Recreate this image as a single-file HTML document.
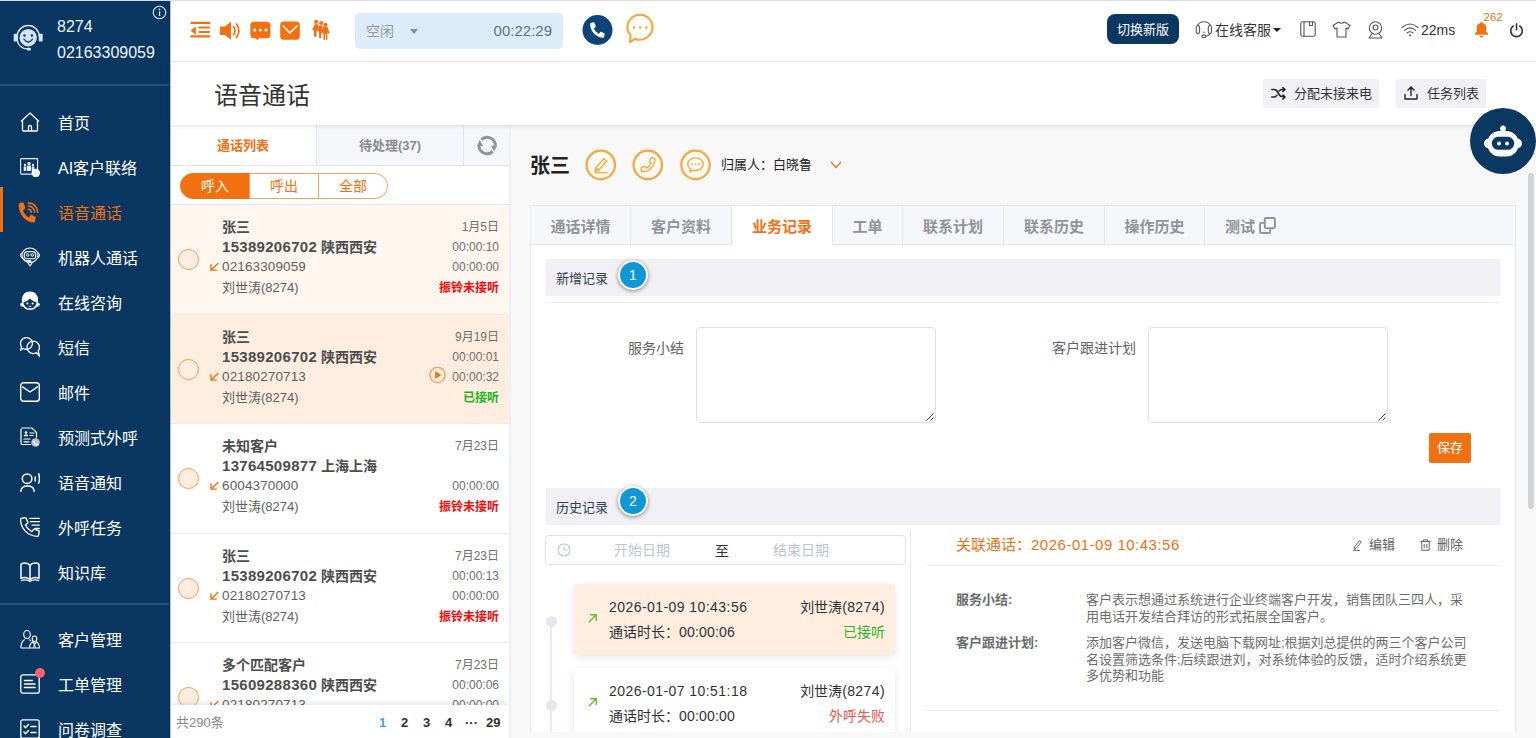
<!DOCTYPE html>
<html lang="zh-CN">
<head>
<meta charset="utf-8">
<title>语音通话</title>
<style>
*{box-sizing:border-box;margin:0;padding:0}
html,body{width:1536px;height:738px;overflow:hidden;background:#fff}
body{font-family:"Liberation Sans","Noto Sans CJK SC",sans-serif;font-size:13px;color:#333;position:relative}
.abs{position:absolute}
svg{display:block}
/* sidebar */
#side{position:absolute;left:0;top:1px;width:170px;height:737px;background:#0a3761;color:#fff}
#topline{position:absolute;left:0;top:0;width:1536px;height:1px;background:#dcdcdc}
#side .uid{position:absolute;left:57px;top:13px;font-size:16px;line-height:26px;color:#eef4fb}
#side .div1{position:absolute;left:0;top:83px;width:170px;height:2px;background:#24527c}
#side .div2{position:absolute;left:0;top:602px;width:170px;height:2px;background:#24527c}
.nav{position:absolute;left:0;width:170px;height:45px}
.nav .ic{position:absolute;left:20px;top:12px;width:20px;height:20px}
.nav .tx{position:absolute;left:58px;top:1px;line-height:45px;font-size:16px;color:#fff;white-space:nowrap}
.nav.act .tx{color:#f2700f}
.nav.act:before{content:"";position:absolute;left:0;top:-3px;width:3px;height:45px;background:#f2700f}
/* top bar */
#top{position:absolute;left:170px;top:1px;width:1366px;height:61px;background:#fff;border-bottom:1px solid #f2f2f2}
#titlebar{position:absolute;left:170px;top:62px;width:1366px;height:63px;background:#fff;box-shadow:0 1px 4px rgba(0,0,0,.12);z-index:3}
#titlebar h1{position:absolute;left:44px;top:17px;font-size:24px;font-weight:400;color:#333;line-height:34px}
.gbtn{position:absolute;top:17px;height:29px;background:#f0f0f5;border-radius:2px;font-size:13px;color:#333;line-height:29px;white-space:nowrap}
/* list panel */
#list{position:absolute;left:170px;top:125px;width:339px;height:613px;background:#fff;overflow:hidden}
#rightbg{position:absolute;left:509px;top:125px;width:1027px;height:613px;background:#f8f8f8;border-left:2px solid #eceef4}
.ltab{position:absolute;top:0;height:41px;line-height:41px;text-align:center;font-size:13px;font-weight:700;color:#8a8a8a;background:#f5f6fa;border-left:1px solid #e1e4ec;border-bottom:1px solid #e1e4ec}
.ltab.on{background:#fff;color:#f2700f;border-left:none;border-bottom:1px solid #e1e4ec}
.pill{position:absolute;top:48px;height:26px;line-height:24px;width:69px;text-align:center;font-size:14px;color:#f2700f;border:1px solid #f5a25e;background:#fff}
.item{position:absolute;left:0;width:339px;height:110px;border-bottom:1px solid #ebedf3;background:#fff}
.item .circ{position:absolute;left:8px;top:44px;width:21px;height:21px;border-radius:50%;border:1px solid #f39a4e;background:#ffeee0}
.item .l{position:absolute;left:52px;white-space:nowrap;color:#5e5e5e;line-height:20px}
.item .r{position:absolute;right:10px;white-space:nowrap;font-size:12px;color:#6e6e6e;text-align:right;line-height:20px}
.item .b{font-weight:700;font-size:14px;color:#4d4d4d}
.item .arr{position:absolute;left:40px;top:57px}
.d1{font-style:normal;font-size:15px;letter-spacing:.3px}.d2{font-style:normal;font-size:13.500px;letter-spacing:.12px}
.d3{font-style:normal;letter-spacing:.2px}.d4{font-style:normal;letter-spacing:.4px}
.miss{color:#fb0808!important;font-weight:700}
.ok{color:#1fb51f!important;font-weight:700}
#pager{position:absolute;left:0;top:580px;width:339px;height:33px;background:#fff;box-shadow:0 -2px 5px rgba(0,0,0,.10)}
#pager span{position:absolute;top:0;line-height:35px;font-size:13px;font-weight:700;color:#303133}
/* detail */
.dtab{position:absolute;top:205px;height:40px;line-height:41px;text-align:center;font-size:15px;font-weight:700;color:#909399;background:#f5f7fa;border:1px solid #e4e7ed;border-left:none}
.dtab.on{background:#fff;color:#f2700f;border-bottom-color:#fff}
#panel{position:absolute;left:530px;top:245px;width:986px;height:487px;background:#fff;border:1px solid #e4e7ed;border-top:none;border-bottom:none;overflow:hidden}
.sec{position:absolute;left:15px;width:954px;height:37px;background:#f0f0f5}
.sec .t{position:absolute;left:10px;top:0;line-height:39px;font-size:13px;color:#2c3e50}
.badge{position:absolute;left:72px;top:1px;width:30px;height:30px;border-radius:50%;background:#0f98d8;border:2px solid #fff;box-shadow:0 1px 4px rgba(0,0,0,.45);color:#fff;font-size:14px;text-align:center;line-height:26px}
.ta{position:absolute;top:83px;width:240px;height:96px;border:1px solid #dcdfe6;border-radius:4px;background:#fff}
.lab{position:absolute;top:94px;font-size:14px;color:#606266;line-height:20px;white-space:nowrap;text-align:right}
.card{position:absolute;left:43px;width:321px;height:71px;border-radius:4px;background:#fff;box-shadow:0 2px 8px rgba(0,0,0,.10)}
.card div{position:absolute;font-size:14px;color:#303133;white-space:nowrap;line-height:20px}
.dot{position:absolute;left:15px;width:11px;height:11px;border-radius:50%;background:#e4e7ed}
</style>
</head>
<body>
<div id="topline"></div>
<div class="abs" style="left:169px;top:1px;width:1px;height:737px;background:#06315b;z-index:6"></div><div class="abs" style="left:170px;top:1px;width:1px;height:737px;background:#b4c1cf;z-index:6"></div>
<div id="side">
  <div class="uid">8274<br>02163309059</div>
  <div class="div1"></div>
  <div class="div2"></div>
  <svg class="abs" style="left:12px;top:22px" width="32" height="30" viewBox="0 0 32 30" fill="none"><circle cx="16.200" cy="14.700" r="8.700" fill="#d2e5fa"/><path d="M5.200 13.500A11 11 0 0 1 27.200 13.500" stroke="#d2e5fa" stroke-width="1.600"/><rect x="1.700" y="10.800" width="3.600" height="7.600" rx="1" fill="#d2e5fa"/><rect x="26.700" y="10.800" width="4" height="7.600" rx="1" fill="#d2e5fa"/><path d="M5.300 13v4.500c.8 5 4.700 8.300 10.700 8.600" stroke="#d2e5fa" stroke-width="1.500"/><rect x="14.800" y="24.700" width="4.200" height="2.700" rx="1.200" fill="#d2e5fa"/><circle cx="12.500" cy="12.500" r="1.200" fill="#0a3761"/><circle cx="19.900" cy="12.500" r="1.200" fill="#0a3761"/><path d="M11.900 16.200q4.300 5.600 8.600 0" stroke="#0a3761" stroke-width="1.300" stroke-linecap="round"/></svg>
  <svg class="abs" style="left:152px;top:4px" width="15" height="15" viewBox="0 0 15 15" fill="none"><circle cx="7.5" cy="7.5" r="6.3" stroke="#e6eef7" stroke-width="1.1"/><rect x="6.9" y="6.3" width="1.3" height="4.8" fill="#e6eef7"/><circle cx="7.5" cy="4.3" r=".9" fill="#e6eef7"/></svg>
  <div class="nav" style="top:99px"><svg class="ic" viewBox="0 0 20 20" fill="none" stroke="#fff" stroke-width="1.3" stroke-linejoin="round"><path d="M1 9.5 10 1l9 8.500"/><path d="M2.500 8.600V18q0 1 1 1h13q1 0 1-1V8.600"/><path d="M8.500 19v-4q0-1.500 1.500-1.500T11.500 15v4"/></svg><span class="tx">首页</span></div>
  <div class="nav" style="top:144px"><svg class="ic" viewBox="0 0 20 20" fill="none"><rect x=".6" y="1.600" width="17" height="15.500" rx=".8" stroke="#e8eef5" stroke-width="1.100"/><g fill="#e8eef5"><circle cx="9" cy="6.500" r="1.700"/><rect x="7" y="8.500" width="4" height="5.500" rx=".8"/><circle cx="5" cy="8" r="1.200"/><rect x="3.700" y="9.600" width="2.600" height="4.400" rx=".5"/><circle cx="13" cy="8" r="1.200"/><rect x="11.700" y="9.600" width="2.600" height="4.400" rx=".5"/></g><circle cx="15.800" cy="16" r="4.200" fill="#fff"/><text x="15.800" y="18" font-size="5" text-anchor="middle" fill="#c9d3de" font-family="Liberation Sans,sans-serif">AI</text></svg><span class="tx">AI客户联络</span></div>
  <div class="nav act" style="top:189px"><svg class="ic" viewBox="0 0 20 20" fill="none" style="overflow:visible"><path transform="translate(15.800,.3) scale(-.0336,.0396)" d="M493.400 24.600l-104-24c-11.300-2.600-22.900 3.300-27.500 13.900l-48 112c-4.200 9.800-1.400 21.300 6.900 28l60.600 49.600c-36 76.700-98.900 140.500-177.200 177.200l-49.600-60.600c-6.800-8.300-18.200-11.100-28-6.900l-112 48C3.900 366.500-2 378.100.6 389.400l24 104C27.100 504.200 36.700 512 48 512c256.100 0 464-207.500 464-464 0-11.200-7.700-20.900-18.600-23.400z" fill="#f2700f"/><path d="M8.300 7.300a3 3 0 0 1 3 3M8.300 4a6.300 6.300 0 0 1 6.300 6.300M8.300 .9a9.400 9.400 0 0 1 9.400 9.400" stroke="#f2700f" stroke-width="1.600" stroke-linecap="round"/></svg><span class="tx">语音通话</span></div>
  <div class="nav" style="top:234px"><svg class="ic" viewBox="0 0 20 20" fill="none" stroke="#fff" stroke-width="1.100"><ellipse cx="10" cy="8.200" rx="8" ry="7.200"/><rect x="4.200" y="4.600" width="11.600" height="7.200" rx="3.400"/><path d="M2.200 5.800Q.6 6.500.6 8.300t1.600 2.500M17.800 5.800q1.600.7 1.600 2.500t-1.600 2.500"/><circle cx="7.700" cy="8" r="1.300" stroke-width=".9"/><circle cx="12.300" cy="8" r="1.300" stroke-width=".9"/><path d="M2.500 10.800q1.500 3 5.500 3.200"/><rect x="7.500" y="13" width="3.800" height="1.800" rx=".9" fill="#fff" stroke="none"/><path d="M7.500 15.200 10 19l2.500-3.800" stroke-linejoin="round"/></svg><span class="tx">机器人通话</span></div>
  <div class="nav" style="top:279px"><svg class="ic" viewBox="0.600 1 18.800 18.800" fill="none" style="top:11px"><path d="M10 1.500c-4.500 0-7.600 3.200-7.600 7.800 0 1 .1 1.800.4 2.600-1.300.2-2 .8-2 1.900 0 1.400 1.300 2.200 3 1.900 1.400 2 3.600 3 6.200 3s4.800-1 6.200-3c1.700.3 3-.5 3-1.900 0-1.100-.7-1.700-2-1.900.3-.8.400-1.600.4-2.600 0-4.600-3.100-7.800-7.600-7.800z" fill="#fff"/><path d="M3.800 11.500c2.600-.4 4.800-1.700 6.200-3.700 1.400 2 3.600 3.300 6.200 3.700-.3 3.500-2.800 5.800-6.200 5.800s-5.900-2.300-6.200-5.800z" fill="#0a3761"/><circle cx="7.500" cy="12.800" r="1" fill="#fff"/><circle cx="12.500" cy="12.800" r="1" fill="#fff"/><path d="M8.800 15.200q1.200.8 2.400 0" stroke="#fff" stroke-width=".8"/></svg><span class="tx">在线咨询</span></div>
  <div class="nav" style="top:324px"><svg class="ic" viewBox="0 0 20 20" fill="none" stroke="#fff" stroke-width="1.300" stroke-linejoin="round"><path d="M6.400 .6A5.900 5.900 0 1 1 3.300 11.500L.5 13.200 1.600 9.900A5.900 5.900 0 0 1 6.400 .6z"/><path d="M13.200 4.100A6.200 6.200 0 1 0 16.500 15.550L19.400 19.200 18.300 13.800A6.200 6.200 0 0 0 13.200 4.100z"/></svg><span class="tx">短信</span></div>
  <div class="nav" style="top:369px"><svg class="ic" viewBox="0 0 20 20" fill="none" stroke="#fff" stroke-width="1.400" stroke-linejoin="round" stroke-linecap="round"><rect x=".7" y=".7" width="18.600" height="18.600" rx="2.800"/><path d="M2.500 4.800 10 10 17.500 4.800"/></svg><span class="tx">邮件</span></div>
  <div class="nav" style="top:414px"><svg class="ic" viewBox="0 0 20 20" fill="none" stroke="#fff" stroke-width="1.200" stroke-linecap="round"><path d="M10.500 17.500H2.500q-1.500 0-1.500-1.500V2.500Q1 1 2.500 1h9.500l4.500 4.500v5"/><path d="M4 12h6M4 14.800h5"/><circle cx="6" cy="5.500" r="1.300" fill="#fff" stroke="none"/><path d="M3.600 9.300q.4-2 2.400-2t2.400 2z" fill="#fff" stroke="none"/><path d="M10 6h4M10 8.500h3"/><circle cx="15.500" cy="15.500" r="4.300" fill="#b9c3cf" stroke="none"/><path d="M13.800 13.600c.3-.3.700-.2.900.1l.4.800c.1.300.1.500-.1.700l-.3.300c.3.700.9 1.300 1.600 1.700l.3-.3c.2-.2.500-.2.700-.1l.7.500c.3.200.3.600.1.800-.9 1-2.100.5-3.300-.5s-2-2.900-1-4z" fill="#fff" stroke="none"/></svg><span class="tx">预测式外呼</span></div>
  <div class="nav" style="top:459px"><svg class="ic" viewBox="0 0 20 20" fill="none" stroke="#fff" stroke-width="1.500" stroke-linecap="round"><circle cx="7.100" cy="6.700" r="4.800"/><path d="M.9 19.200Q1.200 14 7.500 14T14.100 19.200"/><path d="M15.200 5v4M18.700 1.800c1 3 1 6.200 0 9.200"/></svg><span class="tx">语音通知</span></div>
  <div class="nav" style="top:504px"><svg class="ic" viewBox="0 0 20 20" fill="none" stroke="#fff" stroke-linecap="round" stroke-linejoin="round"><path transform="translate(19.300,.6) scale(-.0366,.0366)" stroke-width="36" d="M493.400 24.600l-104-24c-11.300-2.600-22.900 3.300-27.500 13.900l-48 112c-4.200 9.800-1.400 21.300 6.900 28l60.600 49.600c-36 76.700-98.900 140.500-177.200 177.200l-49.600-60.600c-6.800-8.300-18.200-11.100-28-6.900l-112 48C3.900 366.500-2 378.100.6 389.400l24 104C27.100 504.200 36.700 512 48 512c256.100 0 464-207.500 464-464 0-11.200-7.700-20.900-18.600-23.400z"/><path stroke-width="1.300" d="M9.500 1.300h9.800M10.300 4.700h9M12 8.100h7.300M15 11.500h4.300"/></svg><span class="tx">外呼任务</span></div>
  <div class="nav" style="top:549px"><svg class="ic" viewBox="0 0 20 20" fill="none" stroke="#fff" stroke-width="1.500" stroke-linejoin="round"><path d="M10 3.500C8.800 1.800 7 1 5 1S1.600 1.600 1 2.200V16.500c.8-.6 2.200-1 4-1s3.800.8 5 2.500c1.200-1.700 3.200-2.500 5-2.500s3.200.4 4 1V2.200C18.400 1.600 17 1 15 1s-3.800.8-5 2.500zM10 3.500v14.500"/><path d="M.8 18.800c1.200-.6 2.600-.9 4.200-.9 1.900 0 3.700.5 5 1.600 1.300-1.100 3.100-1.600 5-1.600 1.600 0 3 .3 4.200.9" stroke-width="1.100"/></svg><span class="tx">知识库</span></div>
  <div class="nav" style="top:616px"><svg class="ic" viewBox="0 0 20 20" fill="none" stroke="#fff" stroke-width="1.100" stroke-linejoin="round"><ellipse cx="7" cy="5.500" rx="3.300" ry="4"/><path d="M.8 19c.3-4.500 1.600-7.600 4-8.600M9 10.400c.8.300 1.400.9 1.900 1.600M.8 19h8.700"/><ellipse cx="14.500" cy="9.800" rx="2.300" ry="2.800"/><path d="M9.500 19c.2-3 1.200-5 3-6l2 2 2-2c1.800 1 2.800 3 3 6z"/><path d="M14.500 15l-.8 3.800M14.500 15l.8 3.800" stroke-width=".9"/></svg><span class="tx">客户管理</span></div>
  <div class="nav" style="top:661px"><svg class="ic" viewBox="0 0 20 20" fill="none" stroke="#fff" stroke-width="1.300" stroke-linecap="round"><rect x=".8" y=".8" width="18.400" height="18.400" rx="2"/><path d="M4.500 6.500h8M4.500 10h10.500M4.500 13.500h10.500" stroke-width="1.500"/></svg><span class="abs" style="left:35px;top:6px;width:10px;height:10px;border-radius:50%;background:#f5636b"></span><span class="tx">工单管理</span></div>
  <div class="nav" style="top:706px"><svg class="ic" viewBox="0 0 20 20" fill="none" stroke="#fff" stroke-width="1.300" stroke-linecap="round" stroke-linejoin="round"><rect x=".8" y=".8" width="18.400" height="18.400" rx="2"/><path d="M4 7l1.600 1.600L8.500 5.500M4 13l1.600 1.600 2.900-3.100" stroke-width="1.500"/><path d="M11 7.500h5M11 13.500h5" stroke-width="1.600"/></svg><span class="tx">问卷调查</span></div>
</div>
<div id="top">
  <svg class="abs" style="left:20px;top:20px" width="21" height="18" viewBox="0 0 21 18" fill="#f2700f"><rect x=".3" y=".8" width="20.100" height="2.300" rx="1.100"/><rect x="8.300" y="5.400" width="11.800" height="2.200" rx="1.100"/><rect x="8.300" y="9.900" width="11.800" height="2.200" rx="1.100"/><rect x=".3" y="14.300" width="20.100" height="2.300" rx="1.100"/><path d="M.6 9.600 5.900 5.400v8.300z"/></svg>
  <svg class="abs" style="left:50px;top:20px" width="21" height="19" viewBox="0 0 21 19" fill="none"><path d="M0 5.400h4.800L11 .7v18L4.800 14H0z" fill="#f2700f"/><path d="M13.700 5.800q2.600 4 0 7.900M16.500 2.900q4.700 6.800 0 13.700" stroke="#f2700f" stroke-width="1.700" stroke-linecap="round"/></svg>
  <svg class="abs" style="left:80px;top:20px" width="21" height="19" viewBox="0 0 21 19" fill="#f2700f"><path d="M3.800 .8h13q3.700 0 3.700 3.700v9q0 3.700-3.700 3.700H9l-1.800 1.700L5.300 17.200H3.800Q.3 17.200.3 13.500v-9Q.3.8 3.800.8z"/><g fill="#fff"><circle cx="4.800" cy="9" r="1.500"/><circle cx="10.200" cy="9" r="1.500"/><circle cx="16" cy="9" r="1.500"/></g></svg>
  <svg class="abs" style="left:110px;top:20px" width="20" height="19" viewBox="0 0 20 19" fill="none"><rect x=".2" y=".5" width="19.600" height="18.300" rx="3.500" fill="#f2700f"/><path d="M3.300 4.900 9.900 11.900 16.900 4.900" stroke="#fff" stroke-width="1.500" stroke-linecap="round" stroke-linejoin="round"/></svg>
  <svg class="abs" style="left:141px;top:18px" width="20" height="22" viewBox="0 0 20 22" fill="#f2700f"><circle cx="5.200" cy="2.800" r="2.100"/><path d="M3.600 5.200h3.700l-.3 6.600H5.500v6H2.900v-6.300L1.300 11z"/><circle cx="10.100" cy="4" r="2.100"/><path d="M8 6.400h3.700l-.4 6.400h-1.100v6.100H8.100v-6.100L6.500 12z"/><circle cx="14.400" cy="5.800" r="2.100"/><path d="M12.300 8h4.200l2.200 6.200-1.400.6-.9-1.600v7.600h-1.600V15h-.8v5.800h-1.600v-7.600l-.9 1.600-1.400-.6z"/></svg>
  <div class="abs" style="left:185px;top:12px;width:208px;height:36px;background:#dcecfb;border-radius:5px"></div>
  <div class="abs" style="left:196px;top:12px;line-height:37px;font-size:14px;color:#999">空闲</div>
  <div class="abs" style="left:240px;top:28px;width:0;height:0;border:4.500px solid transparent;border-top:5px solid #8c8c8c;border-bottom:none"></div>
  <div class="abs" style="left:300px;top:12px;width:82px;text-align:right;line-height:36px;font-size:15px;color:#5f7182">00:22:29</div>
  <svg class="abs" style="left:412px;top:14px" width="31" height="31" viewBox="0 0 31 31"><circle cx="15.500" cy="15" r="15" fill="#0d4377"/><path transform="translate(22.700,7.300) scale(-.0285,.0300)" d="M493.400 24.600l-104-24c-11.300-2.600-22.900 3.300-27.500 13.900l-48 112c-4.200 9.800-1.400 21.300 6.900 28l60.600 49.600c-36 76.700-98.900 140.500-177.200 177.200l-49.600-60.600c-6.800-8.300-18.200-11.100-28-6.900l-112 48C3.900 366.500-2 378.100.6 389.400l24 104C27.100 504.200 36.700 512 48 512c256.100 0 464-207.500 464-464 0-11.200-7.700-20.900-18.600-23.400z" fill="#fff"/></svg>
  <svg class="abs" style="left:455px;top:13px" width="31" height="31" viewBox="0 0 31 31" fill="none"><path d="M10.100 24.700A12.500 12.500 0 1 0 5.560 21.400L5 28.300z" stroke="#f9a53c" stroke-width="2.100" stroke-linejoin="round" fill="#fffdfa"/><g fill="#f9a53c"><circle cx="9" cy="13.600" r="1.250"/><circle cx="15.200" cy="13.600" r="1.250"/><circle cx="21.400" cy="13.600" r="1.250"/></g></svg>
  <div class="abs" style="left:937px;top:13px;width:72px;height:30px;background:#0b3861;border-radius:8px;color:#fff;font-size:13px;line-height:31px;text-align:center">切换新版</div>
  <svg class="abs" style="left:1025px;top:20px" width="18" height="18" viewBox="0 0 18 18" fill="none" stroke="#555" stroke-width="1.100"><path d="M2.900 4.600A6 3.900 0 0 1 14.900 4.600"/><ellipse cx="2.900" cy="8.400" rx="1.700" ry="4.300"/><ellipse cx="14.900" cy="8.400" rx="1.700" ry="4.300"/><path d="M14.900 12.700q-.5 2.100-3.900 2.500"/><ellipse cx="8.900" cy="15.300" rx="2.100" ry="1.400"/><path d="M7.800 11.200h2.200" stroke-width=".9"/></svg>
  <div class="abs" style="left:1045px;top:11px;line-height:36px;font-size:14px;color:#333">在线客服</div>
  <div class="abs" style="left:1103px;top:27px;width:0;height:0;border:4px solid transparent;border-top:4.500px solid #222;border-bottom:none"></div>
  <svg class="abs" style="left:1130px;top:20px" width="16" height="16" viewBox="0 0 16 16" fill="none" stroke="#555" stroke-width="1.100" stroke-linejoin="round"><rect x=".8" y=".8" width="14.400" height="14.400" rx="1.800"/><path d="M4 .8v14.400M9.500 .8v3.700h3V.8"/></svg>
  <svg class="abs" style="left:1162px;top:20px" width="19" height="17" viewBox="0 0 19 17" fill="none" stroke="#555" stroke-width="1.100" stroke-linejoin="round"><path d="M6.500 1 1 4.500l2 3.500 2-1v9h9V7l2 1 2-3.500L12.500 1q-3 2.500-6 0z"/></svg>
  <svg class="abs" style="left:1197px;top:20px" width="17" height="18" viewBox="0 0 17 18" fill="none" stroke="#555" stroke-width="1.100" stroke-linejoin="round"><circle cx="8.500" cy="7" r="6.200"/><circle cx="8.500" cy="6.500" r="2.500"/><path d="M5 12.500 2 17h13l-3-4.500"/></svg>
  <svg class="abs" style="left:1231px;top:22px" width="18" height="14" viewBox="0 0 18 14" fill="none" stroke="#555" stroke-width="1.100" stroke-linecap="round"><path d="M1 4.500q8-7 16 0M3.500 7.300q5.500-4.800 11 0M6 10q3-2.600 6 0"/><circle cx="9" cy="12.300" r="1" fill="#555" stroke="none"/></svg>
  <div class="abs" style="left:1251px;top:11px;line-height:36px;font-size:14px;color:#333">22ms</div>
  <svg class="abs" style="left:1304px;top:21px" width="15" height="16" viewBox="0 0 15 16" fill="#f2700f"><path d="M7.500 0c.7 0 1.100.4 1.100 1.100 2.400.6 3.700 2.600 3.700 5.200v3.400l1.900 2.100v.9H.8v-.9l1.900-2.100V6.300c0-2.600 1.300-4.600 3.700-5.200C6.400.4 6.800 0 7.500 0zM5.700 13.700h3.600c0 1.100-.8 1.900-1.800 1.900s-1.800-.8-1.800-1.900z"/></svg>
  <div class="abs" style="left:1313.500px;top:10px;font-size:11.500px;line-height:12px;color:#f2700f">262</div>
  <svg class="abs" style="left:1339px;top:22px" width="15" height="15" viewBox="0 0 15 15" fill="none" stroke="#333" stroke-width="1.600" stroke-linecap="round"><path d="M4.300 3A5.800 5.800 0 1 0 10.700 3M7.500 .8v6"/></svg>
</div>
<div id="titlebar">
  <h1>语音通话</h1>
  <div class="gbtn" style="left:1093px;width:116px"><svg class="abs" style="left:8px;top:8px" width="15" height="13" viewBox="0 0 15 13" fill="none" stroke="#222" stroke-width="1.600" stroke-linecap="round" stroke-linejoin="round"><path d="M.8 2.500h2.500c1.500 0 2.300.8 3 2l1.400 2.500c.7 1.200 1.500 2.500 3 2.500h3M.8 10h2.500c1.200 0 2-.8 2.500-1.600M8.300 4c.6-.9 1.300-1.500 2.400-1.500h3M12 .6l2 1.900-2 1.900M12 8.100l2 1.900-2 1.900"/></svg><span class="abs" style="left:31px;top:0">分配未接来电</span></div>
  <div class="gbtn" style="left:1226px;width:90px"><svg class="abs" style="left:8px;top:7px" width="14" height="14" viewBox="0 0 14 14" fill="none" stroke="#222" stroke-width="1.400" stroke-linecap="round" stroke-linejoin="round"><path d="M1 8.500V13h12V8.500M7 9.500V1.200M4 4 7 1l3 3"/></svg><span class="abs" style="left:31px;top:0">任务列表</span></div>
</div>
<div id="list">
  <div class="ltab on" style="left:0;width:146px">通话列表</div>
  <div class="ltab" style="left:146px;width:147px">待处理(37)</div>
  <div class="ltab" style="left:293px;width:46px"><svg class="abs" style="left:13px;top:10px" width="21" height="21" viewBox="-.1 -.5 21 21" fill="none"><path d="M4.300 4.100A8.200 8.200 0 0 1 18.200 10.300M15.700 15.900A8.200 8.200 0 0 1 1.800 10.300" stroke="#8e9299" stroke-width="2.900"/><path d="M14 10.200h6.200l-3.400 5.700zM-.1 10.400h6.200L2.600 4.600z" fill="#8e9299"/></svg></div>
  <div class="abs" style="left:0;top:79px;width:339px;height:1px;background:#e1e4ec"></div>
  <div class="pill" style="left:10px;width:70px;border-radius:13px 0 0 13px;background:#f2700f;border-color:#f2700f;color:#fff">呼入</div>
  <div class="pill" style="left:79px;width:70px">呼出</div>
  <div class="pill" style="left:148px;width:70px;border-radius:0 13px 13px 0">全部</div>
  <div class="item" style="top:80px;height:110px;background:#fff6f0"><span class="circ"></span><svg class="arr" width="9" height="9" viewBox="0 0 9 9" fill="none" stroke="#f2700f" stroke-width="1.400"><path d="M8.300 .9 1.300 7.900M1 2.300v5.800h5.800"/></svg><span class="l b" style="top:12px">张三</span><span class="l b" style="top:32px"><i class="d1">15389206702</i> 陕西西安</span><span class="l" style="top:52px;font-size:13px"><i class="d2">02163309059</i></span><span class="l" style="top:73px;font-size:13px">刘世涛(8274)</span><span class="r" style="top:12px">1月5日</span><span class="r" style="top:32px">00:00:10</span><span class="r" style="top:52px">00:00:00</span><span class="r miss" style="top:73px">振铃未接听</span></div>
  <div class="item" style="top:190px;height:109px;background:#ffeee0"><span class="circ"></span><svg class="arr" width="9" height="9" viewBox="0 0 9 9" fill="none" stroke="#f2700f" stroke-width="1.400"><path d="M8.300 .9 1.300 7.900M1 2.300v5.800h5.800"/></svg><svg class="abs" style="left:259px;top:52px" width="17" height="17" viewBox="0 .5 17 17" fill="none"><circle cx="8.500" cy="8.500" r="7.600" stroke="#f39a55" stroke-width="1.350"/><path d="M6.200 4.600 12.300 8.500 6.200 12.400z" fill="#f2700f"/></svg><span class="l b" style="top:12px">张三</span><span class="l b" style="top:32px"><i class="d1">15389206702</i> 陕西西安</span><span class="l" style="top:52px;font-size:13px"><i class="d2">02180270713</i></span><span class="l" style="top:73px;font-size:13px">刘世涛(8274)</span><span class="r" style="top:12px">9月19日</span><span class="r" style="top:32px">00:00:01</span><span class="r" style="top:52px">00:00:32</span><span class="r ok" style="top:73px">已接听</span></div>
  <div class="item" style="top:299px;height:110px;background:#fff"><span class="circ"></span><svg class="arr" width="9" height="9" viewBox="0 0 9 9" fill="none" stroke="#f2700f" stroke-width="1.400"><path d="M8.300 .9 1.300 7.900M1 2.300v5.800h5.800"/></svg><span class="l b" style="top:12px">未知客户</span><span class="l b" style="top:32px"><i class="d1">13764509877</i> 上海上海</span><span class="l" style="top:52px;font-size:13px"><i class="d2">6004370000</i></span><span class="l" style="top:73px;font-size:13px">刘世涛(8274)</span><span class="r" style="top:12px">7月23日</span><span class="r" style="top:32px"></span><span class="r" style="top:52px">00:00:00</span><span class="r miss" style="top:73px">振铃未接听</span></div>
  <div class="item" style="top:409px;height:109px;background:#fff"><span class="circ"></span><svg class="arr" width="9" height="9" viewBox="0 0 9 9" fill="none" stroke="#f2700f" stroke-width="1.400"><path d="M8.300 .9 1.300 7.900M1 2.300v5.800h5.800"/></svg><span class="l b" style="top:12px">张三</span><span class="l b" style="top:32px"><i class="d1">15389206702</i> 陕西西安</span><span class="l" style="top:52px;font-size:13px"><i class="d2">02180270713</i></span><span class="l" style="top:73px;font-size:13px">刘世涛(8274)</span><span class="r" style="top:12px">7月23日</span><span class="r" style="top:32px">00:00:13</span><span class="r" style="top:52px">00:00:00</span><span class="r miss" style="top:73px">振铃未接听</span></div>
  <div class="item" style="top:518px;height:110px;background:#fff"><span class="circ"></span><svg class="arr" width="9" height="9" viewBox="0 0 9 9" fill="none" stroke="#f2700f" stroke-width="1.400"><path d="M8.300 .9 1.300 7.900M1 2.300v5.800h5.800"/></svg><span class="l b" style="top:12px">多个匹配客户</span><span class="l b" style="top:32px"><i class="d1">15609288360</i> 陕西西安</span><span class="l" style="top:52px;font-size:13px"><i class="d2">02180270713</i></span><span class="l" style="top:73px;font-size:13px">刘世涛(8274)</span><span class="r" style="top:12px">7月23日</span><span class="r" style="top:32px">00:00:06</span><span class="r" style="top:52px">00:00:00</span><span class="r miss" style="top:73px">振铃未接听</span></div>
  <div id="pager"><span style="left:6px;font-weight:400;color:#888">共290条</span><span style="left:209px;color:#409eff">1</span><span style="left:231px">2</span><span style="left:253px">3</span><span style="left:275px">4</span><span style="left:295px;letter-spacing:0">···</span><span style="left:316px">29</span></div>
</div>
<div id="rightbg"></div>
<div class="abs" style="left:530px;top:151px;font-size:20px;font-weight:700;line-height:30px;color:#222">张三</div>
<svg class="abs" style="left:585px;top:149px;overflow:visible" width="31" height="31" viewBox="-.3 -.4 31 31" fill="none"><circle cx="15.500" cy="15.500" r="14.200" stroke="#f9a73e" stroke-width="2.200" fill="#fffaf4"/><path d="M10.500 18.500 18.500 9.300l2.800 2.400-8 9.200-3.600 1.200zM10.500 18.500l2.800 2.400M10 23.200h11.500" stroke="#f9a73e" stroke-width="1.400" stroke-linejoin="round" stroke-linecap="round"/></svg>
<svg class="abs" style="left:632px;top:149px;overflow:visible" width="31" height="31" viewBox="-.3 -.4 31 31" fill="none"><circle cx="15.500" cy="15.500" r="14.200" stroke="#f9a73e" stroke-width="2.200" fill="#fffaf4"/><path transform="translate(8.600,8.300) scale(.0275)" stroke="#f9a73e" stroke-width="50" stroke-linejoin="round" d="M493.400 24.600l-104-24c-11.300-2.600-22.900 3.300-27.500 13.900l-48 112c-4.200 9.800-1.400 21.300 6.900 28l60.600 49.600c-36 76.700-98.900 140.500-177.200 177.200l-49.600-60.600c-6.800-8.300-18.200-11.100-28-6.900l-112 48C3.900 366.500-2 378.100.6 389.400l24 104C27.100 504.200 36.700 512 48 512c256.100 0 464-207.500 464-464 0-11.200-7.700-20.900-18.600-23.400z"/></svg>
<svg class="abs" style="left:680px;top:149px;overflow:visible" width="31" height="31" viewBox="0 -.4 31 31" fill="none"><circle cx="15.500" cy="15.500" r="14.200" stroke="#f9a73e" stroke-width="2.200" fill="#fffaf4"/><path d="M15.500 8.500c-4.300 0-7.700 2.800-7.700 6.300 0 1.900 1 3.600 2.600 4.700l-.6 3 3.200-1.700c.8.200 1.600.3 2.500.3 4.300 0 7.700-2.800 7.700-6.300s-3.400-6.300-7.700-6.300z" stroke="#f9a73e" stroke-width="1.400" stroke-linejoin="round"/><g fill="#f9a73e"><circle cx="12" cy="14.800" r=".9"/><circle cx="15.500" cy="14.800" r=".9"/><circle cx="19" cy="14.800" r=".9"/></g></svg>
<div class="abs" style="left:721px;top:155px;font-size:13px;line-height:20px;color:#222">归属人：白晓鲁</div>
<svg class="abs" style="left:830px;top:161px" width="12" height="8" viewBox="0 0 12 8" fill="none" stroke="#f2700f" stroke-width="1.200"><path d="M1 1l5 5.500L11 1"/></svg>
<div class="dtab" style="left:530px;width:101px;border-left:1px solid #e4e7ed">通话详情</div>
<div class="dtab" style="left:631px;width:101px">客户资料</div>
<div class="dtab on" style="left:732px;width:101px">业务记录</div>
<div class="dtab" style="left:833px;width:70px">工单</div>
<div class="dtab" style="left:903px;width:101px">联系计划</div>
<div class="dtab" style="left:1004px;width:101px">联系历史</div>
<div class="dtab" style="left:1105px;width:100px">操作历史</div>
<div class="dtab" style="left:1205px;width:311px;text-align:left;padding-left:20px">测试 <svg style="display:inline-block;vertical-align:-2px" width="17" height="17" viewBox="0 0 16 16" fill="none" stroke="#909399" stroke-width="1.800" stroke-linejoin="round"><rect x="5.500" y="1" width="9.500" height="9.500" rx="1"/><path d="M5.500 5.500H2q-1 0-1 1V14q0 1 1 1h7.500q1 0 1-1v-3.500"/></svg></div>
<div id="panel"><div class="abs" style="left:0;top:-1px;width:984px;height:488px">
  <div class="sec" style="top:15px"><span class="t">新增记录</span><span class="badge">1</span></div>
  <div class="abs" style="left:15px;top:58px;width:954px;height:1px;background:#ebeef5"></div>
  <div class="lab" style="left:53px;width:100px">服务小结</div>
  <div class="ta" style="left:165px"><svg class="abs" style="left:229px;top:85px" width="8" height="8" viewBox="0 0 8 8" stroke="#444" stroke-width="1"><path d="M.5 7.500 7.500 .5M4.500 7.500 7.500 4.500"/></svg></div>
  <div class="lab" style="left:485px;width:120px">客户跟进计划</div>
  <div class="ta" style="left:617px"><svg class="abs" style="left:229px;top:85px" width="8" height="8" viewBox="0 0 8 8" stroke="#444" stroke-width="1"><path d="M.5 7.500 7.500 .5M4.500 7.500 7.500 4.500"/></svg></div>
  <div class="abs" style="left:898px;top:189px;width:42px;height:30px;background:#f2700f;border-radius:2px;color:#fff;font-size:13px;line-height:30px;text-align:center">保存</div>
  <div class="sec" style="top:244px"><span class="t">历史记录</span><span class="badge" style="top:-2px">2</span></div>
  <div class="abs" style="left:14px;top:291px;width:361px;height:30px;border:1px solid #e0e3ea;border-radius:4px"></div>
  <svg class="abs" style="left:26px;top:299px" width="14" height="14" viewBox="0 0 14 14" fill="none" stroke="#c0c4cc" stroke-width="1.100"><circle cx="7" cy="7" r="6"/><path d="M7 3.500V7h3"/></svg>
  <div class="abs" style="left:83px;top:296px;font-size:14px;line-height:20px;color:#c0c4cc">开始日期</div>
  <div class="abs" style="left:184px;top:297px;font-size:14px;line-height:20px;color:#303133">至</div>
  <div class="abs" style="left:242px;top:296px;font-size:14px;line-height:20px;color:#c0c4cc">结束日期</div>
  <div class="abs" style="left:379px;top:286px;width:1px;height:210px;background:#e4e7ed"></div>
  <div class="abs" style="left:19px;top:378px;width:2px;height:120px;background:#e8ebf1"></div>
  <div class="dot" style="top:372px"></div>
  <div class="dot" style="top:456px"></div>
  <div class="card" style="top:340px;background:#ffeee0"><svg class="abs" style="left:14px;top:30px" width="9" height="9" viewBox="0 0 9 9" fill="none" stroke="#67b83a" stroke-width="1.400"><path d="M.8 8.200 8 1M2 .8h6.200V7"/></svg><div style="left:35px;top:13px;letter-spacing:.44px">2026-01-09 10:43:56</div><div style="left:35px;top:38px">通话时长：<i class="d3">00:00:06</i></div><div style="right:10px;top:13px">刘世涛<i class="d4">(8274)</i></div><div style="right:10px;top:38px;color:#2bb52b">已接听</div></div>
  <div class="card" style="top:424px"><svg class="abs" style="left:14px;top:30px" width="9" height="9" viewBox="0 0 9 9" fill="none" stroke="#67b83a" stroke-width="1.400"><path d="M.8 8.200 8 1M2 .8h6.200V7"/></svg><div style="left:35px;top:13px;letter-spacing:.44px">2026-01-07 10:51:18</div><div style="left:35px;top:38px">通话时长：<i class="d3">00:00:00</i></div><div style="right:10px;top:13px">刘世涛<i class="d4">(8274)</i></div><div style="right:10px;top:38px;color:#f5524a">外呼失败</div></div>
  <div class="abs" id="rel" style="left:425px;top:291px;font-size:15px;line-height:20px;color:#f2700f;white-space:nowrap">关联通话：<i style="font-style:normal;letter-spacing:.5px">2026-01-09 10:43:56</i></div>
  <svg class="abs" style="left:821px;top:295px" width="11" height="12" viewBox="0 0 11 12" fill="none" stroke="#606266" stroke-width="1"><path d="M2.500 8 7.500 1.500l1.800 1.300-5 6.500-2.300.8zM1 11.300h7"/></svg>
  <div class="abs" style="left:838px;top:291px;font-size:13px;line-height:20px;color:#606266">编辑</div>
  <svg class="abs" style="left:889px;top:295px" width="11" height="12" viewBox="0 0 11 12" fill="none" stroke="#606266" stroke-width="1"><path d="M.5 2.500h10M3.500 2.500V.8h4v1.700M1.800 2.500v8.700h7.400V2.500M4.200 5v4M6.800 5v4"/></svg>
  <div class="abs" style="left:906px;top:291px;font-size:13px;line-height:20px;color:#606266">删除</div>
  <div class="abs" style="left:394px;top:321px;width:575px;height:1px;background:#ebeef5"></div>
  <div class="abs" style="left:425px;top:348px;font-size:13px;font-weight:700;line-height:16.700px;color:#696b6f">服务小结:</div>
  <div class="abs" style="left:555px;top:348px;width:384px;font-size:13px;line-height:16.700px;color:#6c6c6c">客户表示想通过系统进行企业终端客户开发，销售团队三四人，采用电话开发结合拜访的形式拓展全国客户。</div>
  <div class="abs" style="left:425px;top:391px;font-size:13px;font-weight:700;line-height:16.700px;color:#696b6f">客户跟进计划:</div>
  <div class="abs" style="left:555px;top:391px;width:384px;font-size:13px;line-height:16.700px;color:#6c6c6c">添加客户微信，发送电脑下载网址;根据刘总提供的两三个客户公司名设置筛选条件;后续跟进刘，对系统体验的反馈，适时介绍系统更多优势和功能</div>
  <div class="abs" style="left:394px;top:466px;width:575px;height:1px;background:#ebeef5"></div>
</div></div>
<div class="abs" style="left:1528px;top:173px;width:6px;height:336px;border-radius:3px;background:#d3d4d6"></div>
<div class="abs" style="left:1470px;top:108px;width:66px;height:66px;border-radius:50%;background:#0b3861;z-index:5"><svg class="abs" style="left:14px;top:16px" width="38" height="34" viewBox="0 0 38 34" fill="none"><circle cx="19" cy="4.400" r="2.900" fill="#fff"/><rect x="17.900" y="5" width="2.200" height="4" fill="#fff"/><rect x="0" y="14.500" width="38" height="10" rx="5" fill="#fff"/><rect x="3.500" y="7" width="31" height="25.500" rx="12" fill="#fff"/><rect x="7.800" y="12.800" width="22.400" height="13" rx="6.500" fill="#0b3861"/><circle cx="15" cy="19.500" r="2" fill="#fff"/><circle cx="23" cy="19.500" r="2" fill="#fff"/></svg></div>
</body>
</html>
